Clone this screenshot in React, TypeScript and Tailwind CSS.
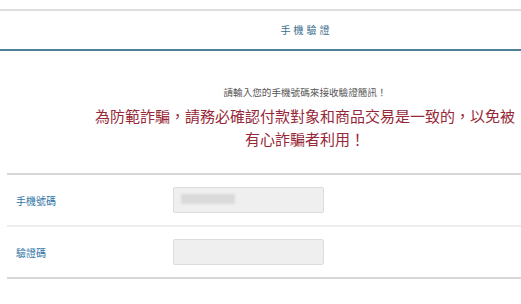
export default function App() {
  return (
    <div
      className="w-[521px] h-[304px] overflow-hidden bg-white"
      style={{ fontFamily: '"Noto Sans CJK TC", "Noto Sans", sans-serif' }}
    >
      <div className="w-[610px] pt-[9px]">
        <div className="h-[2px] bg-[#dedede]" />
        <div className="h-[38px] flex items-center justify-center">
          <span className="text-[10px] leading-[14px] tracking-[3px] text-[#3a6d8e] pl-[3px]">
            手機驗證
          </span>
        </div>
        <div className="h-[2px] bg-[#4f8099]" />

        <div className="pt-[34px] text-center">
          <p className="text-[9.6px] leading-[14px] text-[#555]">
            請輸入您的手機號碼來接收驗證簡訊！
          </p>
          <p className="mx-auto mt-[5px] w-[432px] text-[15px] leading-[23px] text-[#962838]">
            為防範詐騙，請務必確認付款對象和商品交易是一致的，以免被有心詐騙者利用！
          </p>
        </div>
      </div>

      <div className="ml-[7px] mt-[23px]">
        <div className="h-[2px] bg-[#d6d6d6]" />
        <div className="h-[50px] flex items-center">
          <span className="w-[166px] pl-[9px] text-[10px] text-[#2f74a6]">手機號碼</span>
          <div className="relative w-[151px] h-[26px] rounded-[2px] border border-[#dcdcdc] bg-[#efefef]">
            <div className="absolute left-[7px] top-[6px] w-[54px] h-[10px] bg-[#dadada] blur-[1px]" />
          </div>
        </div>
        <div className="h-[2px] bg-[#eeeeee]" />
        <div className="h-[50px] flex items-center">
          <span className="w-[166px] pl-[9px] text-[10px] text-[#2f74a6]">驗證碼</span>
          <div className="w-[151px] h-[26px] rounded-[2px] border border-[#dcdcdc] bg-[#efefef]" />
        </div>
        <div className="h-[2px] bg-[#d6d6d6]" />
      </div>
    </div>
  )
}
